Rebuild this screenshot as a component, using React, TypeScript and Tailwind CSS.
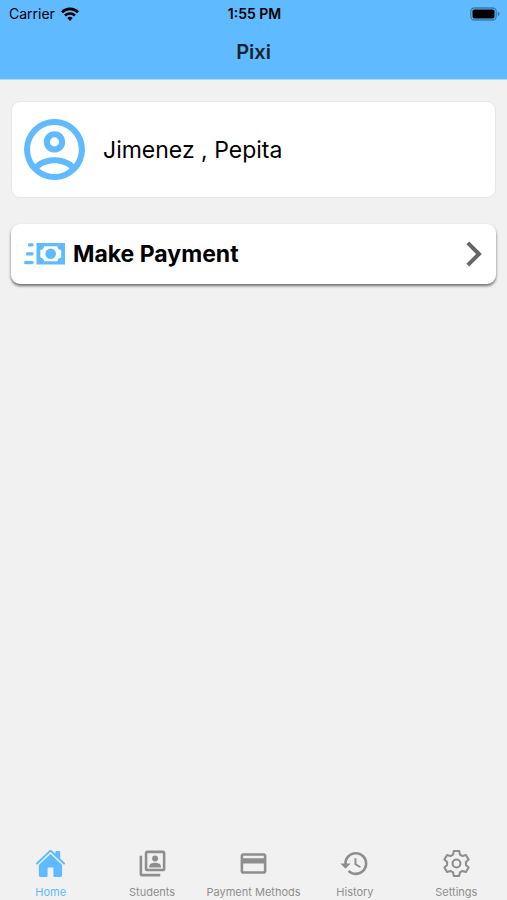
import { type ReactNode } from "react";
import { IoHome } from "react-icons/io5";
import { MdHistory, MdOutlinePayment } from "react-icons/md";

interface Tab {
  label: string;
  icon: ReactNode;
  active?: boolean;
}

const tabs: Tab[] = [
  { label: "Home", icon: <IoHome size={31} />, active: true },
  { label: "Students", icon: <StudentsIcon /> },
  { label: "Payment Methods", icon: <MdOutlinePayment size={31} /> },
  { label: "History", icon: <MdHistory size={31} /> },
  { label: "Settings", icon: <SettingsIcon /> },
];

function WifiIcon() {
  return (
    <svg aria-hidden="true" className="h-[14px] w-[18px]" viewBox="0 0 18 14">
      <g fill="none" stroke="#000" strokeWidth="2.6">
        <path d="M1 5.2a11.4 11.4 0 0 1 16 0" />
        <path d="M4 8.5a7.1 7.1 0 0 1 10 0" />
      </g>
      <path d="M9 14l-2.7-2.9a3.8 3.8 0 0 1 5.4 0z" />
    </svg>
  );
}

function BatteryIcon() {
  return (
    <svg aria-hidden="true" className="h-[14px] w-[30px]" viewBox="0 0 30 14">
      <rect
        fill="none"
        height="12"
        rx="3.5"
        stroke="#3f7ba8"
        strokeWidth="1.3"
        width="25.4"
        x="0.8"
        y="1"
      />
      <rect height="9" rx="1.8" width="22" x="2.5" y="2.5" />
      <path d="M27.7 4.8q2 .6 2 2.2t-2 2.2z" fill="#3f7ba8" />
    </svg>
  );
}

function AccountIcon() {
  return (
    <svg
      aria-hidden="true"
      className="size-[61px] shrink-0 fill-[#5fbaff]"
      viewBox="2 2 20 20"
    >
      <path d="M12 2A10 10 0 0 0 2 12a10 10 0 0 0 10 10 10 10 0 0 0 10-10A10 10 0 0 0 12 2M7.07 18.28c.43-.9 3.05-1.78 4.93-1.78s4.51.88 4.93 1.78A7.9 7.9 0 0 1 12 20c-1.86 0-3.57-.64-4.93-1.72m11.29-1.45c-1.43-1.74-4.9-2.33-6.36-2.33s-4.93.59-6.36 2.33A7.93 7.93 0 0 1 4 12c0-4.41 3.59-8 8-8s8 3.59 8 8c0 1.82-.62 3.5-1.64 4.83M12 6c-1.94 0-3.5 1.56-3.5 3.5S10.06 13 12 13s3.5-1.56 3.5-3.5S13.94 6 12 6m0 5a1.5 1.5 0 0 1-1.5-1.5A1.5 1.5 0 0 1 12 8a1.5 1.5 0 0 1 1.5 1.5A1.5 1.5 0 0 1 12 11" />
    </svg>
  );
}

function CashFastIcon() {
  return (
    <svg
      aria-hidden="true"
      className="h-[22px] w-[41px] shrink-0 fill-[#5fbaff]"
      viewBox="0 0 41 22"
    >
      <path
        d="M12.5 0H41v21.5H12.500zM20 3.200q0 3.300-3.700 3.800v7.500q3.700.5 3.700 3.800h13.500q0-3.300 3.700-3.800V7q-3.700-.5-3.700-3.800z"
        fillRule="evenodd"
      />
      <circle cx="26.7" cy="10.800" r="5.300" />
      <rect height="3.200" rx="1.2" width="5.500" x="4" y="0.300" />
      <rect height="3.200" rx="1.2" width="7.500" x="2" y="9.200" />
      <rect height="3.200" rx="1.2" width="9.300" x="0.200" y="18" />
    </svg>
  );
}

function ChevronIcon() {
  return (
    <svg aria-hidden="true" className="h-[26px] w-4 shrink-0" viewBox="0 0 16 26">
      <path
        d="M1.800 1.800L13 13 1.800 24.200"
        fill="none"
        stroke="#666"
        strokeWidth="4"
      />
    </svg>
  );
}

function StudentsIcon() {
  return (
    <svg
      aria-hidden="true"
      className="size-[31px]"
      fill="none"
      stroke="currentColor"
      strokeWidth="2"
      viewBox="0 0 24 24"
    >
      <rect height="14" rx="1" width="14" x="7" y="3" />
      <path d="M3 6v14a1 1 0 0 0 1 1h14" />
      <g fill="currentColor" stroke="none">
        <circle cx="14" cy="8.200" r="2.300" />
        <path d="M9.500 15v-.9c0-1.700 2.600-2.600 4.500-2.600s4.500.9 4.500 2.600v.9z" />
      </g>
    </svg>
  );
}

function SettingsIcon() {
  return (
    <svg
      aria-hidden="true"
      className="size-[29px]"
      fill="none"
      stroke="currentColor"
      strokeLinejoin="round"
      strokeWidth="2"
      viewBox="-14 -14 28 28"
    >
      <path d="M-2.600-12H2.600L3.300-8.600 5.800-7.200 9.100-8.200 11.700-3.800 9.100-1.400V1.400L11.700 3.800 9.100 8.200 5.800 7.200 3.300 8.600 2.600 12H-2.600L-3.300 8.600-5.800 7.200-9.100 8.200-11.700 3.800-9.100 1.400V-1.400L-11.700-3.800-9.100-8.200-5.800-7.200-3.300-8.600z" />
      <circle r="3.800" />
    </svg>
  );
}

function TabItem({ label, icon, active }: Tab) {
  return (
    <button
      aria-current={active ? "page" : undefined}
      className={`flex min-w-0 flex-1 flex-col items-center ${
        active ? "text-[#5fbaff]" : "text-[#8e8e8e]"
      }`}
      type="button"
    >
      <span className="flex h-9 items-center">{icon}</span>
      <span className="mt-1 text-[11px] leading-4 whitespace-nowrap">
        {label}
      </span>
    </button>
  );
}

export default function App() {
  return (
    <div className="flex min-h-screen flex-col bg-[#f1f1f1] font-['Inter',sans-serif] text-black">
      <header className="border-b border-[#b5d9f3] bg-[#5fbaff]">
        <div className="grid h-7 grid-cols-3 items-center pr-[7px] pl-[9px] text-sm">
          <div className="flex items-center gap-[6px]">
            <span>Carrier</span>
            <WifiIcon />
          </div>
          <span className="text-center font-semibold">1:55 PM</span>
          <div className="flex justify-end">
            <BatteryIcon />
          </div>
        </div>
        <h1 className="pt-[10px] pb-[13px] text-center text-xl leading-7 font-semibold text-[#17242e]">
          Pixi
        </h1>
      </header>

      <main className="flex flex-1 flex-col gap-[26px] px-[11px] pt-[21px]">
        <section className="flex h-[97px] items-center gap-[18px] rounded-[9px] border border-[#e6e6e6] bg-white px-3">
          <AccountIcon />
          <p className="text-[23px] leading-8">Jimenez , Pepita</p>
        </section>
        <button
          className="flex h-[60px] items-center gap-2 rounded-[9px] bg-white pr-[14px] pl-[13px] text-left shadow-[0_2px_3px_rgba(0,0,0,0.55)]"
          type="button"
        >
          <CashFastIcon />
          <span className="flex-1 text-[23px] leading-8 font-bold">
            Make Payment
          </span>
          <ChevronIcon />
        </button>
      </main>

      <nav aria-label="Main" className="flex h-[54px]">
        {tabs.map((tab) => (
          <TabItem key={tab.label} {...tab} />
        ))}
      </nav>
    </div>
  );
}
